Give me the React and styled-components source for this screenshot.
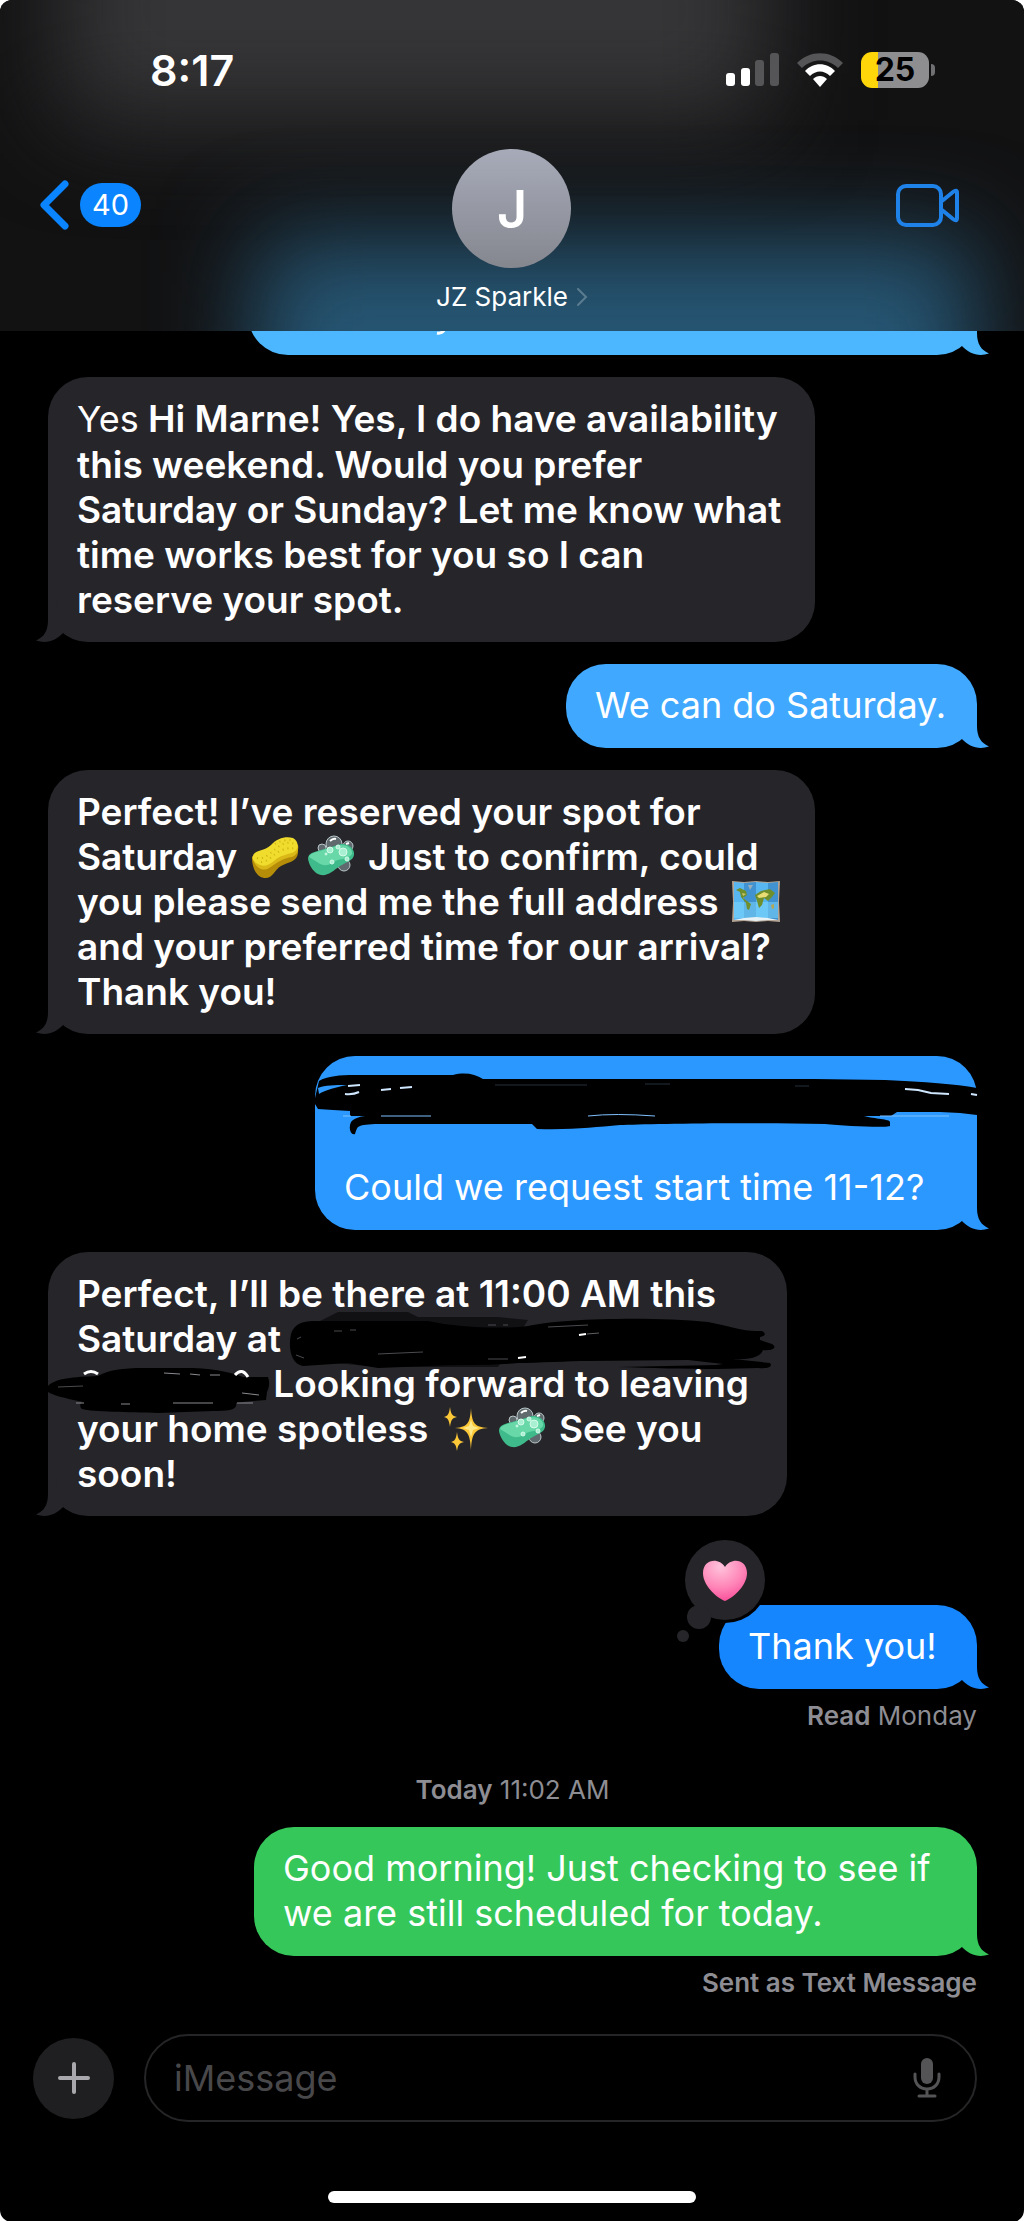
import React from "react";
import styled, { createGlobalStyle } from "styled-components";

const GlobalStyle = createGlobalStyle`
  * {
    box-sizing: border-box;
  }
  body {
    margin: 0;
    background: #ffffff;
    font-family: Inter, "Liberation Sans", sans-serif;
  }
  button {
    border: 0;
    padding: 0;
    background: transparent;
    font-family: inherit;
    cursor: pointer;
  }
  svg {
    display: block;
  }
`;

const Phone = styled.div`
  display: flex;
  flex-direction: column;
  min-height: 100vh;
  background: #000000;
  color: #ffffff;
  border-radius: 12px;
  overflow: hidden;
`;

/* header */
const Header = styled.header`
  position: relative;
  z-index: 1;
  isolation: isolate;
  overflow: hidden;
  background: #121213;
  padding-bottom: 17px;
  &::before,
  &::after {
    content: "";
    position: absolute;
    z-index: -1;
  }
  &::before {
    left: 6%;
    right: 25%;
    top: -100px;
    height: 220px;
    background: #363638;
    filter: blur(50px);
  }
  &::after {
    left: 25%;
    right: 5%;
    top: 240px;
    height: 240px;
    background: #265674;
    filter: blur(48px);
  }
`;
const StatusBar = styled.div`
  display: flex;
  justify-content: space-between;
  align-items: center;
  height: 109px;
  margin-bottom: 40px;
  padding: 30px 89px 0 150px;
`;
const Clock = styled.time`
  font-size: 43px;
  line-height: 50px;
  font-weight: 600;
`;
const StatusIcons = styled.div`
  display: flex;
  align-items: center;
  gap: 18px;
`;
const Battery = styled.div`
  position: relative;
  width: 68px;
  height: 36px;
  margin-right: 6px;
  border-radius: 11px;
  background: linear-gradient(90deg, #ffd60a 17px, #8e8e90 17px);
  color: #000000;
  font-size: 32px;
  line-height: 36px;
  font-weight: 700;
  text-align: center;
  &::after {
    content: "";
    position: absolute;
    left: 70px;
    top: 12px;
    width: 4px;
    height: 12px;
    border-radius: 0 4px 4px 0;
    background: #707072;
  }
`;
const Nav = styled.nav`
  display: grid;
  grid-template-columns: 1fr auto 1fr;
  align-items: start;
  padding: 0 64px 0 40px;
`;
const BackButton = styled.button`
  display: flex;
  align-items: center;
  gap: 11px;
  height: 112px;
  justify-self: start;
`;
const Unread = styled.span`
  padding: 0 12px;
  border-radius: 22px;
  background: #0a84ff;
  color: #ffffff;
  font-size: 29px;
  line-height: 44px;
`;
const VideoButton = styled.button`
  display: flex;
  align-items: center;
  height: 112px;
  justify-self: end;
`;
const Contact = styled.button`
  display: flex;
  flex-direction: column;
  align-items: center;
  gap: 12px;
  margin-left: 24px;
  color: #ffffff;
`;
const Avatar = styled.span`
  width: 119px;
  height: 119px;
  border-radius: 50%;
  background: linear-gradient(#a7abb9, #85878f);
  font-size: 52px;
  line-height: 122px;
  font-weight: 600;
`;
const ContactName = styled.span`
  display: flex;
  align-items: center;
  gap: 9px;
  font-size: 26px;
  line-height: 34px;
`;

/* messages */
const Thread = styled.main`
  display: flex;
  flex-direction: column;
  flex: 1;
  margin-top: -60px;
  padding: 0 47px 0 48px;
`;
const Bubble = styled.div`
  position: relative;
  align-self: ${(props) => (props.$sent ? "flex-end" : "flex-start")};
  min-width: ${(props) => props.$width || "0"};
  margin-bottom: ${(props) => props.$after || "22px"};
  padding: 19px 29px 20px;
  border-radius: 40px;
  background: ${(props) => props.$color || "#26252a"};
  color: ${(props) => props.$color || "#26252a"};
`;
const Message = styled.p`
  margin: 0;
  color: #ffffff;
  font-size: ${(props) => (props.$bold ? "37px" : "36px")};
  line-height: 45px;
  font-weight: ${(props) => (props.$bold ? 600 : 400)};
  white-space: nowrap;
`;
const Line = styled.span`
  display: block;
  min-height: 45px;
`;
const Regular = styled.span`
  font-size: 36px;
  font-weight: 400;
`;
const Blank = styled.span`
  display: inline-block;
  width: ${(props) => props.$width};
`;
const TailShape = styled.svg`
  position: absolute;
  bottom: 0;
  ${(props) =>
    props.$sent ? "right: -12px;" : "left: -12px; transform: scaleX(-1);"}
`;
const Emoji = styled.svg`
  display: inline-block;
  width: 48px;
  height: 44px;
  margin: 0 4px;
  vertical-align: -9px;
`;
const Scribble = styled.svg`
  position: absolute;
  left: 0;
  top: 0;
  overflow: visible;
`;
const Reaction = styled.svg`
  position: absolute;
  left: -44px;
  top: -70px;
`;
const Receipt = styled.p`
  margin: 0 0 ${(props) => props.$after};
  align-self: ${(props) => (props.$center ? "center" : "flex-end")};
  color: #8d8d93;
  font-size: 26px;
  line-height: 34px;
  b {
    font-weight: 600;
  }
`;

/* composer */
const Composer = styled.form`
  display: flex;
  align-items: center;
  gap: 30px;
  padding: 0 47px 0 33px;
`;
const AddButton = styled.button`
  display: grid;
  place-items: center;
  flex: none;
  width: 81px;
  height: 81px;
  border-radius: 50%;
  background: #1f1f21;
`;
const Field = styled.label`
  display: flex;
  align-items: center;
  flex: 1;
  height: 88px;
  padding: 0 34px 0 28px;
  border: 2px solid #252527;
  border-radius: 44px;
`;
const TextInput = styled.input`
  flex: 1;
  min-width: 0;
  padding: 0;
  border: 0;
  outline: 0;
  background: transparent;
  color: #ffffff;
  font-family: inherit;
  font-size: 36px;
  &::placeholder {
    color: #48484a;
    opacity: 1;
  }
`;
const HomeBar = styled.div`
  align-self: center;
  width: 36%;
  height: 12px;
  margin: 69px 0 19px;
  border-radius: 6px;
  background: #ffffff;
`;

const Tail = ({ sent }) => (
  <TailShape $sent={sent} width="40" height="44" viewBox="0 0 40 44">
    <path
      fill="currentColor"
      d="M28 2V22C28 33 32 39 40 42.500C30 46 20 43 12 34Q20 24 20 2Z"
    />
  </TailShape>
);

const Sponge = () => (
  <Emoji role="img" aria-label="sponge" viewBox="0 0 48 44">
    <path
      fill="#b58d08"
      d="M1 23C1 32 5 42 13 43C22 44 23 35 30 31C37 27 46 27 47 18V12Z"
    />
    <path
      fill="#d9b817"
      d="M1 22C4 33 12 37 18 33C26 28 32 23 41 22C46 20 48 16 47 10L40 4L5 18Z"
    />
    <path
      fill="#f0dc2c"
      d="M2 21C3 15 12 17 20 10C26 3 35 1 42 3C48 6 48 14 43 17C36 20 29 20 23 26C17 31 12 32 7 29C3 27 1 24 2 21Z"
    />
    <path
      stroke="#cdb414"
      strokeWidth="2"
      strokeDasharray="1 4"
      fill="none"
      d="M6 23C14 25 20 17 27 12S38 7 44 9M10 27C18 27 23 18 31 15S40 14 43 13M24 9C30 5 36 5 40 5"
    />
  </Emoji>
);

const Soap = () => (
  <Emoji role="img" aria-label="soap" viewBox="0 0 48 44">
    <g fill="#606a6e" stroke="#b9c7ca" strokeWidth="1">
      <circle cx="27" cy="9" r="8" />
      <circle cx="41" cy="11" r="5" />
      <circle cx="15" cy="13" r="4" />
      <circle cx="37" cy="30" r="6" />
    </g>
    <path
      fill="#3fba8a"
      d="M1 24C1 18 7 17 14 15L34 9C42 8 48 14 47 20C46 26 39 27 33 31C26 36 21 41 14 40C7 39 2 30 1 24Z"
    />
    <path
      fill="#68d8a8"
      d="M2 22C3 18 10 17 16 15L34 10C42 10 46 15 45 19C41 25 31 23 25 28C19 32 14 30 10 27Z"
    />
    <g fill="#a9efd2" stroke="#d4fbea" strokeWidth="1">
      <circle cx="23" cy="15" r="3" />
      <circle cx="36" cy="17" r="4" />
      <circle cx="31" cy="12" r="2" />
      <circle cx="25" cy="27" r="2" />
      <circle cx="40" cy="24" r="2" />
      <circle cx="19" cy="19" r="1" />
    </g>
    <path d="M23 6Q26 3 29 4" stroke="#ffffff" strokeWidth="2" fill="none" />
    <path d="M39 9l3-1" stroke="#ffffff" strokeWidth="2" />
  </Emoji>
);

const WorldMap = () => (
  <Emoji role="img" aria-label="world map" viewBox="0 0 48 44">
    <path fill="#b3a493" d="M0 1L12 2L24 1L36 2L48 1L47 22L48 42L36 41L24 42L12 41L0 42L1 22Z" />
    <path fill="#58b6f0" d="M2 2L12 3V39L2 40ZM24 2L36 3V39L24 40Z" />
    <path fill="#4093d0" d="M12 3L24 2V40L12 39ZM36 3L46 2V40L36 39Z" />
    <path fill="#80d9fb" opacity="0.5" d="M2 22H46V38H2Z" />
    <path fill="#e6f2f5" d="M2 40L12 38L24 37L36 38L46 40L36 40L24 41L12 40Z" />
    <path
      fill="#6f8f2c"
      d="M4 10L8 8L14 11L15 15L11 18L15 21L19 24L17 30L15 29L14 23L9 17L8 12ZM23 15L29 11L38 9L43 13L40 17L36 21L32 18L30 25L27 28L25 21Z"
    />
    <path fill="#e9dc74" d="M25 16L32 12L37 14L34 17L27 18Z" />
    <path fill="#c9c46a" d="M10 13L14 14L11 16Z" />
    <path fill="#97adb9" d="M16 5L21 5L18 10Z" />
    <path fill="#b5a653" d="M39 25L42 24L42 28L40 29Z" />
  </Emoji>
);

const Sparkles = () => (
  <Emoji role="img" aria-label="sparkles" viewBox="0 0 48 44">
    <path
      fill="#fcc838"
      d="M29 1C30 16 32 20 46 21C32 22 30 27 29 43C28 27 26 22 13 21C26 20 28 16 29 1ZM8 0C9 7 10 9 15 10C10 11 9 13 8 20C7 13 6 11 2 10C6 9 7 7 8 0ZM15 25C16 32 17 34 22 35C17 36 16 38 15 44C14 38 13 36 9 35C13 34 14 32 15 25Z"
    />
    <path fill="#ffe98a" d="M29 13L31 19L37 21L31 23L29 30L27 23L21 21L27 19Z" />
  </Emoji>
);

const SignalIcon = () => (
  <svg width="53" height="34" viewBox="0 0 53 34" aria-label="Signal">
    <rect x="0" y="20" width="9" height="13" rx="3" fill="#ffffff" />
    <rect x="15" y="15" width="9" height="18" rx="3" fill="#ffffff" />
    <rect x="29" y="7" width="9" height="26" rx="3" fill="#555557" />
    <rect x="44" y="0" width="9" height="33" rx="3" fill="#555557" />
  </svg>
);

const WifiIcon = () => (
  <svg width="46" height="34" viewBox="0 0 46 34" aria-label="Wi-Fi">
    <path fill="#555557" d="M0 10C13-3 33-3 46 10L41 15C31 5 15 5 5 15Z" />
    <path fill="#ffffff" d="M8 18C16 9 30 9 38 18L33 23C27 17 19 17 13 23Z" />
    <path fill="#ffffff" d="M16 26C20 22 26 22 30 26L23 34Z" />
  </svg>
);

// strokes drawn across the street address
const SentScribble = () => (
  <Scribble width="662" height="100" fill="none" aria-hidden="true">
    <path
      fill="#000000"
      d="M4 25C12 20 25 19 40 19H138C150 16 160 18 168 23H500L570 24C610 26 640 28 662 32V59L645 57L625 56H582L576 60H549C560 63 575 63 575 66V70C570 72 530 70 510 68C420 66 330 68 305 69C280 71 260 74 222 73L217 68H60C40 69 43 71 40 78C36 80 33 72 36 66C40 61 48 60 52 60H35V55L18 54L3 53L0 48V42Z"
    />
    <path
      fill="#2f9aff"
      d="M3 32C10 29 20 29 32 29C22 31 10 34 4 38Z"
    />
    <path stroke="#cfe6ff" strokeWidth="2" d="M33 30L45 29M30 38Q38 39 44 36M66 34L76 33M85 32L97 31M590 33L603 34L616 37L634 38M656 38L662 39" />
    <path stroke="#7fc0ff" strokeWidth="1" d="M28 60H36M66 60H116M273 60Q300 57 340 60M565 60H634" />
    <path stroke="#27313f" strokeWidth="1" d="M180 29H272M330 28H355M480 30H494" />
  </Scribble>
);

const ReceivedScribble = () => (
  <Scribble width="739" height="265" fill="none" aria-hidden="true">
    <path
      fill="#0d0d0f"
      d="M262 74L290 60H360L370 65H450L480 68L450 115H330L255 108Z"
      opacity="0.8"
    />
    <path
      fill="#000000"
      d="M243 82C246 72 255 69 265 69H380C410 76 460 77 480 74C510 67 600 64 660 70C680 74 695 79 708 79H714C718 81 718 84 712 85V88L724 92C730 96 724 99 715 98C713 104 705 108 685 107L722 111C725 115 720 117 710 116L670 117C640 117 600 116 570 115L668 113L675 112L640 108L540 109C520 109 490 111 470 111C440 114 410 112 380 114L330 116L300 111L255 114C243 112 240 96 243 82Z"
    />
    <path
      fill="#000000"
      d="M0 134C8 126 25 125 50 124C60 118 75 116 95 116H145C170 117 185 121 195 125H220C222 130 221 136 219 140L218 148C205 149 195 150 188 151C190 158 180 159 165 159L110 161C80 160 45 160 34 157C31 154 32 151 35 150C15 146 5 143 0 140Z"
    />
    <path stroke="#ffffff" strokeWidth="3" d="M36 122Q43 117 50 122M187 123Q194 115 200 125" />
    <path stroke="#8a8a90" strokeWidth="1" d="M28 151H36M73 152H82M125 151H165M189 151H205M116 121L132 122M142 122L152 123M162 123L172 123M194 141L211 143" />
    <path stroke="#4b4b50" strokeWidth="1" d="M10 135L35 134M249 87L253 85M248 103L256 106M330 102L375 100M440 107L460 107M440 73H448M455 73H460M500 75L540 73M286 79H294M302 78H308" />
    <path stroke="#ffffff" strokeWidth="2" d="M531 83L538 82M470 106L478 105" />
    <path stroke="#606065" strokeWidth="1" d="M539 82L551 81" />
  </Scribble>
);

const HeartReaction = () => (
  <Reaction width="96" height="108" viewBox="0 0 96 108" role="img" aria-label="Loved">
    <defs>
      <radialGradient id="heart" cx="40%" cy="15%" r="85%">
        <stop offset="0" stopColor="#ffc3dc" />
        <stop offset="0.6" stopColor="#ff86b8" />
        <stop offset="1" stopColor="#f9529c" />
      </radialGradient>
    </defs>
    <circle cx="50" cy="45" r="43" fill="#000000" />
    <circle cx="50" cy="45" r="40" fill="#26252a" />
    <circle cx="24" cy="82" r="12" fill="#26252a" />
    <circle cx="8" cy="101" r="6" fill="#26252a" />
    <path
      fill="url(#heart)"
      d="M50 66C44 64 28 52 28 38C28 24 44 22 50 32C56 22 72 24 72 38C72 52 56 64 50 66Z"
    />
  </Reaction>
);

const App = () => {
  return (
    <Phone>
      <GlobalStyle />
      <Header>
        <StatusBar>
          <Clock>8:17</Clock>
          <StatusIcons>
            <SignalIcon />
            <WifiIcon />
            <Battery>25</Battery>
          </StatusIcons>
        </StatusBar>
        <Nav>
          <BackButton aria-label="Back, 40 unread">
            <svg width="29" height="50" viewBox="0 0 29 50" fill="none">
              <path
                d="M25 4L4 25L25 46"
                stroke="#0a84ff"
                strokeWidth="7"
                strokeLinecap="round"
                strokeLinejoin="round"
              />
            </svg>
            <Unread>40</Unread>
          </BackButton>
          <Contact>
            <Avatar>J</Avatar>
            <ContactName>
              JZ Sparkle
              <svg width="11" height="18" viewBox="0 0 11 18" fill="none">
                <path d="M1 1L9 9L1 17" stroke="#5c7d90" strokeWidth="2" strokeLinecap="round" />
              </svg>
            </ContactName>
          </Contact>
          <VideoButton aria-label="Video call">
            <svg width="64" height="43" viewBox="0 0 64 43" fill="none" stroke="#1f82e8" strokeWidth="4">
              <rect x="2" y="2" width="43" height="39" rx="8" />
              <path d="M46 17L57 8Q61 5 61 9V34Q61 38 57 35L46 26" strokeLinejoin="round" />
            </svg>
          </VideoButton>
        </Nav>
      </Header>

      <Thread>
        <Bubble $sent $color="#4cb7fe" $width="729px">
          <Scribble width="729" height="84" fill="none" aria-hidden="true">
            <path d="M189 62Q194 63 197 58" stroke="#ffffff" strokeWidth="3" />
          </Scribble>
          <Message>
            <Line />
          </Message>
          <Tail sent />
        </Bubble>

        <Bubble $width="767px">
          <Message $bold>
            <Line>
              <Regular>Yes</Regular> Hi Marne! Yes, I do have availability
            </Line>
            <Line>this weekend. Would you prefer</Line>
            <Line>Saturday or Sunday? Let me know what</Line>
            <Line>time works best for you so I can</Line>
            <Line>reserve your spot.</Line>
          </Message>
          <Tail />
        </Bubble>

        <Bubble $sent $color="#40a9ff" $width="411px">
          <Message>We can do Saturday.</Message>
          <Tail sent />
        </Bubble>

        <Bubble $width="767px">
          <Message $bold>
            <Line>Perfect! I’ve reserved your spot for</Line>
            <Line>
              Saturday <Sponge />
              <Soap /> Just to confirm, could
            </Line>
            <Line>
              you please send me the full address <WorldMap />
            </Line>
            <Line>and your preferred time for our arrival?</Line>
            <Line>Thank you!</Line>
          </Message>
          <Tail />
        </Bubble>

        <Bubble $sent $color="#2b98ff" $width="662px">
          <Message>
            <Line />
            <Line />
            <Line>Could we request start time 11-12?</Line>
          </Message>
          <SentScribble />
          <Tail sent />
        </Bubble>

        <Bubble $width="739px" $after="89px">
          <Message $bold>
            <Line>Perfect, I’ll be there at 11:00 AM this</Line>
            <Line>Saturday at</Line>
            <Line>
              <Blank $width="187px" /> Looking forward to leaving
            </Line>
            <Line>
              your home spotless <Sparkles />
              <Soap /> See you
            </Line>
            <Line>soon!</Line>
          </Message>
          <ReceivedScribble />
          <Tail />
        </Bubble>

        <Bubble $sent $color="#1686ff" $width="258px" $after="10px">
          <Message>Thank you!</Message>
          <HeartReaction />
          <Tail sent />
        </Bubble>
        <Receipt $after="40px">
          <b>Read</b> Monday
        </Receipt>

        <Receipt $center $after="20px">
          <b>Today</b> 11:02 AM
        </Receipt>
        <Bubble $sent $color="#35c759" $width="723px" $after="10px">
          <Message>
            <Line>Good morning! Just checking to see if</Line>
            <Line>we are still scheduled for today.</Line>
          </Message>
          <Tail sent />
        </Bubble>
        <Receipt $after="34px">
          <b>Sent as Text Message</b>
        </Receipt>
      </Thread>

      <Composer>
        <AddButton type="button" aria-label="Add">
          <svg width="32" height="32" viewBox="0 0 32 32" stroke="#a9a9ad" strokeWidth="4" strokeLinecap="round">
            <path d="M16 2V30M2 16H30" />
          </svg>
        </AddButton>
        <Field>
          <TextInput type="text" placeholder="iMessage" aria-label="iMessage" />
          <svg width="28" height="40" viewBox="0 0 28 40" fill="none" stroke="#545456" strokeWidth="3" strokeLinecap="round">
            <rect x="8" y="0" width="12" height="26" rx="6" fill="#545456" stroke="none" />
            <path d="M2 16V19C2 26 7 31 14 31S26 26 26 19V16M14 31V38M6 38H22" />
          </svg>
        </Field>
      </Composer>
      <HomeBar />
    </Phone>
  );
};

export default App;
